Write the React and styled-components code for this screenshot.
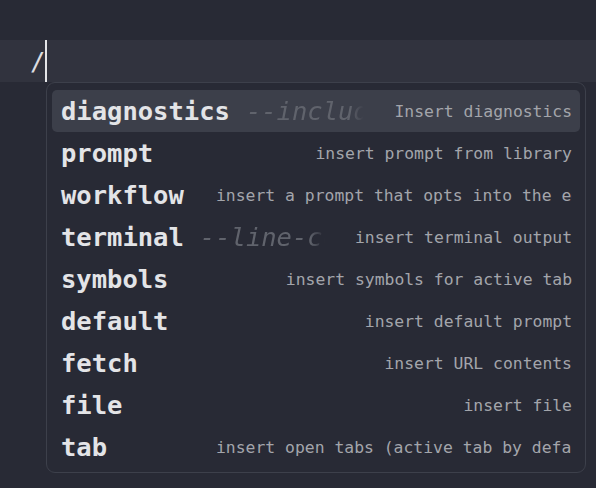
import React from "react";
import styled, { createGlobalStyle } from "styled-components";

const GlobalStyle = createGlobalStyle`
  html, body {
    margin: 0;
    padding: 0;
    background: #282a35;
  }
  body {
    font-family: "DejaVu Sans Mono", "Liberation Mono", monospace;
  }
`;

const Editor = styled.div`
  width: 596px;
  height: 488px;
  padding-top: 40px;
  box-sizing: border-box;
  background: #282a35;
  overflow: hidden;
`;

const Line = styled.div`
  position: relative;
  display: flex;
  align-items: center;
  height: 42px;
  padding-left: 30px;
  background: #31333e;
  color: #dcdde0;
  font-size: 25.5px;
`;

const Cursor = styled.span`
  display: inline-block;
  width: 2px;
  height: 42px;
  background: #e4e5e8;
`;

const Menu = styled.div`
  position: absolute;
  top: 100%;
  left: 46px;
  width: 540px;
  box-sizing: border-box;
  padding: 7px 5px 4px;
  background: #282a35;
  border: 1px solid #3d404b;
  border-radius: 9px;
`;

const Row = styled.div`
  display: flex;
  align-items: center;
  height: 42px;
  padding: 0 8px 0 9px;
  border-radius: 5px;
  background: ${(p) => (p.$selected ? "#3c3f4a" : "transparent")};
  white-space: nowrap;
  overflow: hidden;
`;

const Name = styled.span`
  flex-shrink: 0;
  font-size: 25.5px;
  font-weight: bold;
  color: #e3e4e7;
`;

const Flag = styled.span`
  flex: 0 1000 auto;
  min-width: 0;
  overflow: hidden;
  margin-left: 16px;
  font-size: 25.5px;
  font-style: italic;
  color: #60636c;
  -webkit-mask-image: linear-gradient(to right, #000 88%, transparent);
  mask-image: linear-gradient(to right, #000 88%, transparent);
`;

const Description = styled.span`
  flex: 0 1 auto;
  min-width: 0;
  max-width: 356px;
  overflow: hidden;
  margin-left: auto;
  padding-left: 30px;
  font-size: 16.4px;
  color: #a3a5ab;
`;

const items = [
  { name: "diagnostics", flag: "--include-warnings", desc: "Insert diagnostics" },
  { name: "prompt", desc: "insert prompt from library" },
  { name: "workflow", desc: "insert a prompt that opts into the edit workflow" },
  { name: "terminal", flag: "--line-count", desc: "insert terminal output" },
  { name: "symbols", desc: "insert symbols for active tab" },
  { name: "default", desc: "insert default prompt" },
  { name: "fetch", desc: "insert URL contents" },
  { name: "file", desc: "insert file" },
  { name: "tab", desc: "insert open tabs (active tab by default)" },
];

export default function App() {
  return (
    <>
      <GlobalStyle />
      <Editor>
        <Line>
          /<Cursor />
          <Menu>
            {items.map((item, i) => (
              <Row key={item.name} $selected={i === 0}>
                <Name>{item.name}</Name>
                {item.flag && <Flag>{item.flag}</Flag>}
                <Description>{item.desc}</Description>
              </Row>
            ))}
          </Menu>
        </Line>
      </Editor>
    </>
  );
}
